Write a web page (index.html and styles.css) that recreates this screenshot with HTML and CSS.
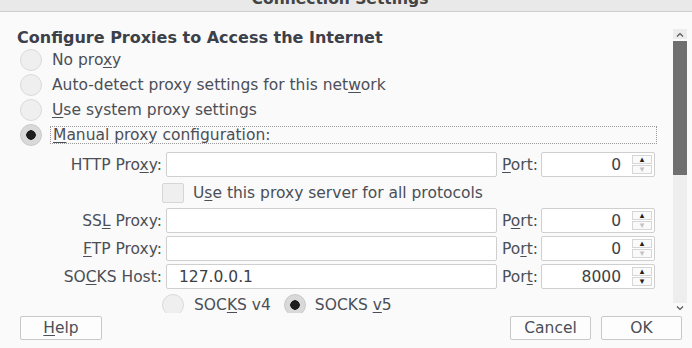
FILE: index.html
```html
<!DOCTYPE html>
<html>
  <head>
    <meta charset="UTF-8">
    <title>Connection Settings</title>
    <link rel="stylesheet" href="styles.css">
  </head>
  <body>
    <div class="titlebar"><span>Connection Settings</span></div>
    <div class="dialog">
      <div class="scrollarea">
        <div class="content">
          <h1>Configure Proxies to Access the Internet</h1>
          <div class="option"><span class="radio"></span><span>No pro<u>x</u>y</span></div>
          <div class="option"><span class="radio"></span><span>Auto-detect proxy settings for this net<u>w</u>ork</span></div>
          <div class="option"><span class="radio"></span><span><u>U</u>se system proxy settings</span></div>
          <div class="option manual"><span class="radio checked"></span><span class="focus"><u>M</u>anual proxy configuration:</span></div>

          <div class="form">
            <span class="label">HTTP Pro<u>x</u>y:</span>
            <input class="field" type="text" value="">
            <span class="label port"><u>P</u>ort:</span>
            <div class="spin">
              <span class="num">0</span>
              <span class="arrows"><span class="up">&#9652;</span><span class="down off">&#9662;</span></span>
            </div>

            <div class="check-row">
              <span class="checkbox"></span><span>U<u>s</u>e this proxy server for all protocols</span>
            </div>

            <span class="label">SS<u>L</u> Proxy:</span>
            <input class="field" type="text" value="">
            <span class="label port">P<u>o</u>rt:</span>
            <div class="spin">
              <span class="num">0</span>
              <span class="arrows"><span class="up">&#9652;</span><span class="down off">&#9662;</span></span>
            </div>

            <span class="label"><u>F</u>TP Proxy:</span>
            <input class="field" type="text" value="">
            <span class="label port">Po<u>r</u>t:</span>
            <div class="spin">
              <span class="num">0</span>
              <span class="arrows"><span class="up">&#9652;</span><span class="down off">&#9662;</span></span>
            </div>

            <span class="label">SO<u>C</u>KS Host:</span>
            <input class="field" type="text" value="127.0.0.1">
            <span class="label port">Por<u>t</u>:</span>
            <div class="spin">
              <span class="num">8000</span>
              <span class="arrows"><span class="up">&#9652;</span><span class="down">&#9662;</span></span>
            </div>

            <div class="socks-row">
              <span class="radio"></span><span>SOC<u>K</u>S v4</span>
              <span class="radio checked v5"></span><span>SOCKS <u>v</u>5</span>
            </div>
          </div>
        </div>
        <div class="scrollbar">
          <div class="sb-btn">
            <svg width="8" height="5" viewBox="0 0 8 5"><polyline points="1,4.5 4,1.5 7,4.5" fill="none" stroke="#555" stroke-width="1.2"/></svg>
          </div>
          <div class="sb-thumb"></div>
          <div class="sb-track"></div>
          <div class="sb-btn down-btn">
            <svg width="8" height="5" viewBox="0 0 8 5"><polyline points="1,0.5 4,3.5 7,0.5" fill="none" stroke="#555" stroke-width="1.2"/></svg>
          </div>
        </div>
      </div>
      <div class="buttons">
        <button class="help"><u>H</u>elp</button>
        <span class="sep"></span>
        <button>Cancel</button>
        <button>OK</button>
      </div>
    </div>
  </body>
</html>
```

FILE: styles.css
```css
body {
  margin: 0;
  width: 692px;
  height: 348px;
  overflow: hidden;
  background: #fafafa;
  color: #4b4f57;
  font: 15.5px "DejaVu Sans", sans-serif;
}

u {
  text-underline-offset: 2px;
}

.titlebar {
  height: 11px;
  background: #e9e9e9;
  border-bottom: 1px solid #cfcfcf;
  overflow: hidden;
  text-align: center;
  padding-right: 12px;
}
.titlebar span {
  display: block;
  margin-top: -10px;
  line-height: 18px;
  font-weight: bold;
  color: #444;
}

.dialog {
  padding-top: 16px;
}

.scrollarea {
  display: flex;
  height: 285px;
  overflow: hidden;
  padding-right: 5px;
}
.content {
  flex: 1;
  padding-left: 17px;
}

h1 {
  margin: 0;
  font-size: 16px;
  line-height: 19px;
  color: #3b4049;
}

.option {
  display: flex;
  align-items: center;
  height: 25px;
  gap: 10px;
  margin-left: 3px;
}
.manual {
  gap: 8px;
  margin-right: 16px;
}
.focus {
  flex: 1;
  line-height: 16px;
  padding: 0 2px;
  border: 1px dotted #9a9a9a;
}

.radio {
  flex: none;
  box-sizing: border-box;
  width: 22px;
  height: 22px;
  border-radius: 50%;
  background: #efefef;
  border: 1px solid #dadada;
}
.radio.checked {
  background: radial-gradient(circle, #1e1e1e 0 4.5px, #d9d9d9 5px);
  border-color: #c9c9c9;
}

.form {
  display: grid;
  grid-template-columns: 145px 331px 36px 114px;
  grid-auto-rows: 25px;
  column-gap: 4px;
  row-gap: 3px;
  margin-top: 5px;
}
.label {
  text-align: right;
  align-self: center;
  white-space: nowrap;
}
.label.port {
  text-align: left;
  padding-left: 1px;
}
.field {
  box-sizing: border-box;
  height: 25px;
  margin: 0;
  border: 1px solid #cfcfcf;
  border-radius: 2px;
  background: #fff;
  padding: 0 12px;
  font: 15.5px "DejaVu Sans", sans-serif;
  color: #3c3f45;
  outline: none;
}

.spin {
  box-sizing: border-box;
  display: flex;
  align-items: center;
  border: 1px solid #cfcfcf;
  border-radius: 2px;
  background: #fff;
}
.num {
  flex: 1;
  text-align: right;
  padding-right: 11px;
  color: #3c3f45;
}
.arrows {
  display: flex;
  flex-direction: column;
  gap: 1px;
  margin-right: 2px;
}
.arrows span {
  box-sizing: border-box;
  width: 20px;
  height: 9px;
  border: 1px solid #d6d6d6;
  background: #fafafa;
  font-size: 9px;
  line-height: 7px;
  text-align: center;
  color: #222;
}
.arrows .off {
  color: #c4c4c4;
}

.check-row,
.socks-row {
  grid-column: 2 / span 3;
  display: flex;
  align-items: center;
  margin-left: -4px;
  gap: 9px;
}
.checkbox {
  box-sizing: border-box;
  width: 22px;
  height: 20px;
  border: 1px solid #d6d6d6;
  border-radius: 2px;
  background: #efefef;
}
.socks-row {
  gap: 10px;
}
.socks-row .v5 {
  margin-left: 3px;
  margin-right: -1px;
}

.scrollbar {
  width: 14px;
  display: flex;
  flex-direction: column;
  padding-top: 1px;
}
.sb-btn {
  height: 10px;
  background: #ececec;
  display: flex;
  align-items: center;
  justify-content: center;
}
.sb-thumb {
  height: 134px;
  margin-top: 2px;
  background: #6f6f6f;
}
.sb-track {
  flex: 1;
  background: #eeeeee;
}
.down-btn {
  background: none;
}

.buttons {
  display: flex;
  gap: 10px;
  padding: 3px 10px 0 20px;
}
.sep {
  flex: 1;
}
button {
  box-sizing: border-box;
  width: 81px;
  height: 24px;
  margin: 0;
  padding: 0;
  border: 1px solid #c8c8c8;
  border-radius: 2px;
  background: #fdfdfd;
  font: 15.5px "DejaVu Sans", sans-serif;
  color: #4b4f57;
}
.help {
  width: 82px;
}
```
